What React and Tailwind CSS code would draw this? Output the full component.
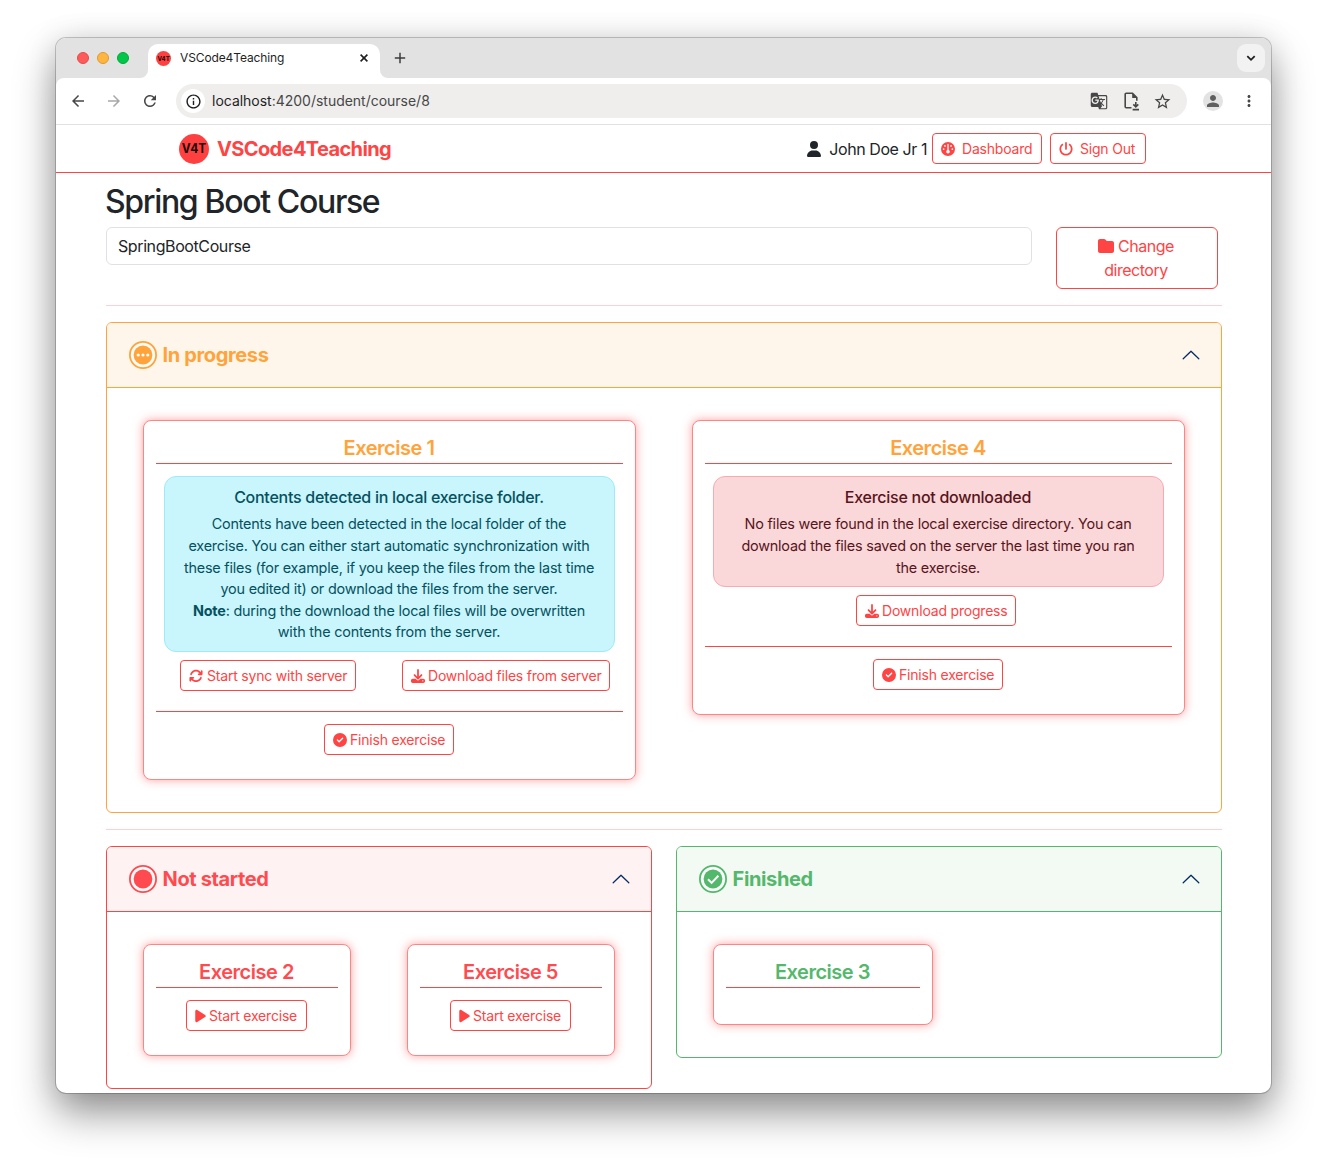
import { FaUser, FaGauge, FaPowerOff, FaFolder, FaArrowsRotate, FaDownload, FaCircleCheck, FaPlay } from "react-icons/fa6";
import { MdArrowBack, MdArrowForward, MdRefresh, MdInfoOutline, MdGTranslate, MdStarBorder, MdPerson, MdMoreVert } from "react-icons/md";

function Logo({ className }) {
  return (
    <svg viewBox="0 0 30 30" className={className}>
      <circle cx="15" cy="15" r="15" fill="#ff4040" />
      <text x="15" y="19.4" textAnchor="middle" textLength="24.5" lengthAdjust="spacingAndGlyphs" fontSize="12.5" fontWeight="700" fontFamily="Inter" fill="#160606">V4T</text>
    </svg>
  );
}

function TabBar() {
  return (
    <div className="flex h-10 shrink-0 items-end bg-[#e2e2e2] pr-[6px]">
      <div className="flex h-10 w-[84px] items-center gap-2 pl-[21px]">
        <span className="size-3 rounded-full border border-[#e24b4a] bg-[#ff5a5a]" />
        <span className="size-3 rounded-full border border-[#e09a2c] bg-[#ffb640]" />
        <span className="size-3 rounded-full border border-[#00ab37] bg-[#00c64a]" />
      </div>
      <div className="h-[10px] w-2 bg-white"><div className="size-full rounded-br-[10px] bg-[#e2e2e2]" /></div>
      <div className="flex h-[34px] w-[232px] items-center rounded-t-[10px] bg-white pb-[7px] pl-2 pt-0">
        <Logo className="mt-px size-[15px]" />
        <span className="ml-[9px] mt-[1px] text-[12px] leading-4 tracking-[-0.01em] text-[#1f1f1f]">VSCode4Teaching</span>
        <svg viewBox="0 0 8 8" className="ml-auto mr-3 mt-px size-2" stroke="#1f1f1f" strokeWidth="1.6"><path d="M.6.6l6.8 6.8M7.4.6L.6 7.4" /></svg>
      </div>
      <div className="h-[10px] w-2 bg-white"><div className="size-full rounded-bl-[10px] bg-[#e2e2e2]" /></div>
      <svg viewBox="0 0 12 12" className="mb-[14px] ml-[6px] size-3" stroke="#3c3c3c" strokeWidth="1.5"><path d="M6 .8v10.4M.8 6h10.4" /></svg>
      <div className="mb-[6px] ml-auto flex size-7 items-center justify-center rounded-[9px] bg-[#f2f2f2]">
        <svg viewBox="0 0 10 10" className="size-[10px]" fill="none" stroke="#1f1f1f" strokeWidth="1.8"><path d="M1.3 3.2L5 6.8l3.7-3.6" /></svg>
      </div>
    </div>
  );
}

function Toolbar() {
  return (
    <div className="shrink-0 bg-[#e2e2e2]">
      <div className="flex h-[47px] items-center rounded-t-[8px] border-b border-[#dfe1e5] bg-white pl-[13px] text-[#474747]">
        <MdArrowBack className="size-[18px]" />
        <MdArrowForward className="ml-[18px] size-[18px] text-[#a8a8a8]" />
        <MdRefresh className="ml-[18px] size-[18px]" />
        <div className="ml-[17px] flex h-[34px] w-[1011px] items-center rounded-full bg-[#efeeed] pl-[5px] pr-[15px]">
          <span className="flex size-6 items-center justify-center rounded-full bg-white text-[#1f1f1f]"><MdInfoOutline className="size-[17px]" /></span>
          <span className="ml-[7px] text-sm tracking-[-0.001em] text-[#474747]"><span className="text-[#1f1f1f]">localhost</span>:4200/student/course/8</span>
          <MdGTranslate className="ml-auto size-[18px]" />
          <svg viewBox="0 0 18 20" className="ml-[15px] h-5 w-[18px]" fill="none" stroke="currentColor" strokeWidth="1.6">
            <path d="M8.5 16.8H3.2a1 1 0 01-1-1V3.3a1 1 0 011-1h6.3l4.3 4.3v3.2" />
            <path d="M9.2 2.3v4.6h4.6z" fill="currentColor" stroke="none" />
            <path d="M12.8 11v4.5M10.3 13.4l2.5 2.5 2.5-2.5M9.6 18.6h6.4" />
          </svg>
          <MdStarBorder className="ml-[12px] size-[19px]" />
        </div>
        <span className="ml-4 flex size-5 items-center justify-center rounded-full bg-[#e3e3e3] text-[#5f5f5f]"><MdPerson className="size-[18px]" /></span>
        <MdMoreVert className="ml-[17px] size-[18px]" />
      </div>
    </div>
  );
}

function Btn({ icon: Icon, children, className = "", iconClass = "mr-1 size-[14px]" }) {
  return (
    <button className={"flex h-[31px] items-center whitespace-nowrap rounded-[4px] border border-[#ff4444] pl-2 text-sm tracking-[-0.014em] text-[#ff4444] " + className}>
      <Icon className={iconClass + " shrink-0"} />
      {children}
    </button>
  );
}

function NavBar() {
  return (
    <div className="flex h-12 shrink-0 items-center border-b border-[#ff4444] pl-[123px] pr-[125px]">
      <Logo className="size-[30px]" />
      <span className="ml-2 text-[20px] font-bold tracking-[-0.031em] text-[#ff4444]">VSCode4Teaching</span>
      <FaUser className="ml-auto h-4 w-[14px] text-[#212529]" />
      <span className="ml-[8px] mr-[5px] text-base tracking-[-0.027em] text-[#212529]">John Doe Jr 1</span>
      <Btn icon={FaGauge} className="w-[110px]" iconClass="mr-[7px] size-[14px]">Dashboard</Btn>
      <Btn icon={FaPowerOff} className="ml-2 w-24" iconClass="mr-[7px] size-[14px]">Sign Out</Btn>
    </div>
  );
}

function Status({ kind }) {
  return (
    <svg viewBox="0 0 28 28" className="size-7">
      <circle cx="14" cy="14" r="13.1" fill="#fff" fillOpacity=".6" stroke="currentColor" strokeWidth="1.8" />
      <circle cx="14" cy="14" r="9.4" fill="currentColor" />
      {kind === "dots" && <g fill="#fff"><circle cx="9.2" cy="14" r="1.6" /><circle cx="14" cy="14" r="1.6" /><circle cx="18.8" cy="14" r="1.6" /></g>}
      {kind === "check" && <path d="M9 14.2l3.6 3.7 6.8-7.2" fill="none" stroke="#fff" strokeWidth="2" />}
    </svg>
  );
}

function Panel({ kind, title, color, head, className = "", children }) {
  return (
    <section className={"overflow-hidden rounded-[6px] border " + color + " " + className}>
      <header className={"flex h-[65px] items-center border-b border-inherit pl-[22px] pr-[21px] " + head}>
        <Status kind={kind} />
        <h2 className="ml-[5.5px] text-[20px] font-bold leading-6 tracking-[-0.018em]">{title}</h2>
        <svg viewBox="0 0 18 10" className="ml-auto h-[10px] w-[18px]" fill="none" stroke="#052c65" strokeWidth="1.3" strokeLinecap="round" strokeLinejoin="round"><path d="M1.2 8.8L9 1.2l7.8 7.6" /></svg>
      </header>
      <div className="flex items-start px-9 py-8">{children}</div>
    </section>
  );
}

function Card({ title, className = "", children }) {
  return (
    <div className={"rounded-[8px] border border-[#ff8585] bg-white px-3 shadow-[0_0_10px_rgba(255,68,68,0.5)] " + className}>
      <h3 className="h-[43px] border-b border-[#ff4444] pr-px pt-[15px] text-center text-[20px] font-semibold leading-6 tracking-[-0.024em]">{title}</h3>
      {children}
    </div>
  );
}

function Alert({ title, className = "", children }) {
  return (
    <div className={"mx-2 mb-2 mt-3 rounded-[12px] border pl-4 pr-[17px] pt-[10px] text-center " + className}>
      <h4 className="mb-[6.4px] text-base font-medium leading-5 tracking-[-0.0165em]">{title}</h4>
      <p className="whitespace-nowrap text-[14.4px] leading-[21.6px] tracking-[-0.0138em]">{children}</p>
    </div>
  );
}

const Rule = () => <div className="mb-3 mt-5 h-px bg-[#ff4444]" />;

export default function App() {
  return (
    <div className="h-[1167px] overflow-hidden bg-white px-14 pt-[38px] font-['Inter',sans-serif]">
      <div className="flex h-[1055px] w-[1215px] flex-col overflow-hidden rounded-[10px] bg-white shadow-[0_0_0_1px_rgba(0,0,0,0.2),0_20px_40px_rgba(0,0,0,0.42),0_0_30px_rgba(0,0,0,0.1)]">
        <TabBar />
        <Toolbar />
        <NavBar />
        <main className="pl-[50px] pr-[49px]">
          <h1 className="-ml-px mt-[10px] text-[32px] font-medium leading-[38px] tracking-[-0.042em] text-[#212529]">Spring Boot Course</h1>
          <div className="mt-[6px] flex items-start">
            <div className="flex h-[38px] w-[926px] items-center rounded-[6px] border border-[#dee2e6] pl-[11px] text-base tracking-[-0.025em] text-[#212529]">SpringBootCourse</div>
            <button className="ml-6 h-[62px] w-[162px] rounded-[6px] border border-[#ff4444] pr-[2px] text-base leading-6 tracking-[-0.029em] text-[#ff4444]">
              <span className="flex items-center justify-center"><FaFolder className="mr-1 size-4" />Change</span>
              <span className="block">directory</span>
            </button>
          </div>
          <div className="mb-4 mt-4 h-px bg-[#ffcfd1]" />

          <Panel kind="dots" title="In progress" color="border-[#ffa33a] text-[#ffa33a]" head="bg-[#fff6eb]" className="h-[491px]">
            <Card title="Exercise 1" className="h-[360px] w-[493px]">
              <Alert title="Contents detected in local exercise folder." className="h-44 border-[#9eeaf9] bg-[#c9f5fc] text-[#055160]">
                Contents have been detected in the local folder of the<br />
                exercise. You can either start automatic synchronization with<br />
                these files (for example, if you keep the files from the last time<br />
                you edited it) or download the files from the server.<br />
                <b>Note</b>: during the download the local files will be overwritten<br />
                with the contents from the server.
              </Alert>
              <div className="flex justify-between pl-6 pr-[13px]">
                <Btn icon={FaArrowsRotate} className="w-44">Start sync with server</Btn>
                <Btn icon={FaDownload} className="w-52" iconClass="mr-[3px] size-[14px]">Download files from server</Btn>
              </div>
              <Rule />
              <Btn icon={FaCircleCheck} className="ml-[168px] w-[130px]" iconClass="mr-[3px] size-[14px]">Finish exercise</Btn>
            </Card>
            <Card title="Exercise 4" className="ml-14 h-[295px] w-[493px]">
              <Alert title="Exercise not downloaded" className="h-[111px] border-[#f8aab2] bg-[#fad7d9] text-[#58151c]">
                No files were found in the local exercise directory. You can<br />
                download the files saved on the server the last time you ran<br />
                the exercise.
              </Alert>
              <Btn icon={FaDownload} className="ml-[151px] w-40" iconClass="mr-[3px] size-[14px]">Download progress</Btn>
              <Rule />
              <Btn icon={FaCircleCheck} className="ml-[168px] w-[130px]" iconClass="mr-[3px] size-[14px]">Finish exercise</Btn>
            </Card>
          </Panel>

          <div className="mb-4 mt-4 h-px bg-[#ffcfd1]" />

          <div className="flex items-start justify-between">
            <Panel kind="full" title="Not started" color="border-[#ff4444] text-[#ff4b50]" head="bg-[#fff2f2]" className="h-[243px] w-[546px]">
              <Card title="Exercise 2" className="h-28 w-52">
                <Btn icon={FaPlay} iconClass="mr-[3px] h-[14px] w-[11px]" className="ml-[30px] mt-3 w-[121px]">Start exercise</Btn>
              </Card>
              <Card title="Exercise 5" className="ml-14 h-28 w-52">
                <Btn icon={FaPlay} iconClass="mr-[3px] h-[14px] w-[11px]" className="ml-[30px] mt-3 w-[121px]">Start exercise</Btn>
              </Card>
            </Panel>
            <Panel kind="check" title="Finished" color="border-[#54b86c] text-[#54b86c]" head="bg-[#f3faf4]" className="h-[212px] w-[546px]">
              <Card title="Exercise 3" className="h-[81px] w-[220px]" />
            </Panel>
          </div>
        </main>
      </div>
    </div>
  );
}
